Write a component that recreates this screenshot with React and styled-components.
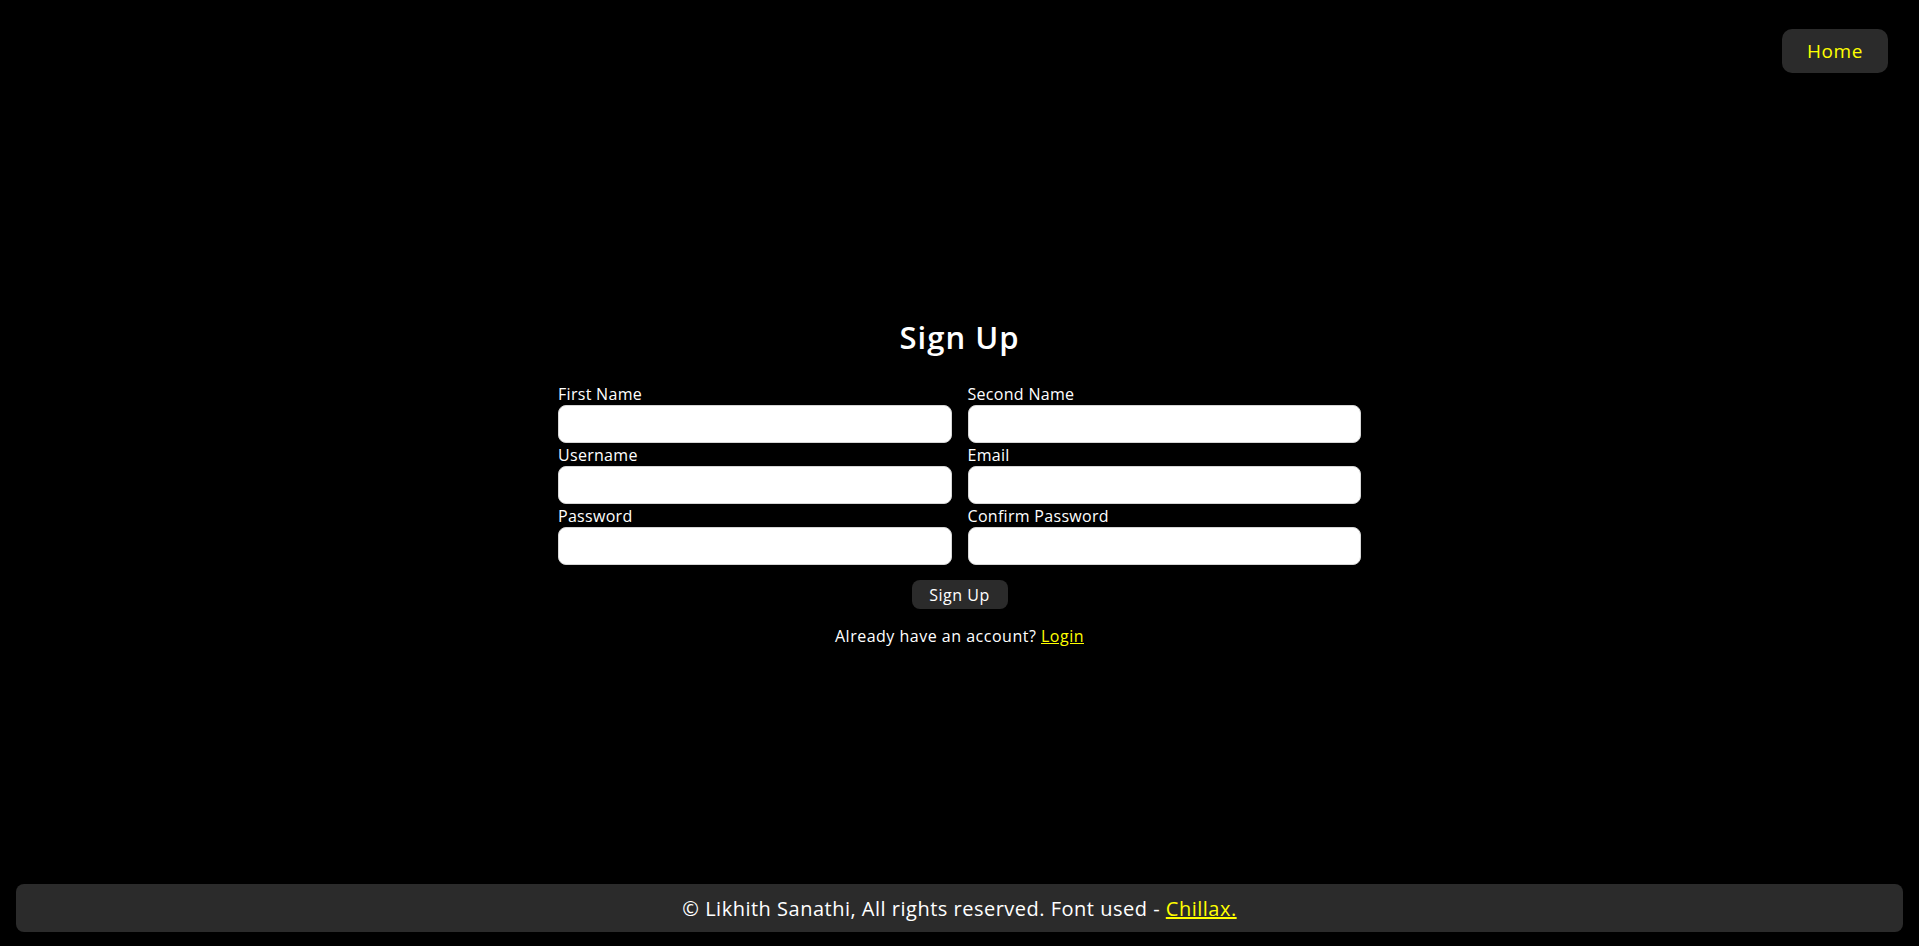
import React from "react";
import styled, { createGlobalStyle } from "styled-components";

const GlobalStyle = createGlobalStyle`
  * {
    box-sizing: border-box;
  }

  body {
    margin: 0;
    background-color: #000;
    color: #fff;
    font-family: "Open Sans", "Noto Sans", sans-serif;
  }
`;

const Page = styled.div`
  min-height: 100vh;
  display: flex;
  flex-direction: column;
`;

const Header = styled.header`
  display: flex;
  justify-content: flex-end;
  padding: 29px 31px 0 0;
`;

const HomeButton = styled.a`
  display: flex;
  align-items: center;
  justify-content: center;
  width: 106px;
  height: 44px;
  border-radius: 10px;
  background-color: #2b2b2b;
  color: #ffff00;
  font-size: 19px;
  letter-spacing: 0.6px;
  text-decoration: none;
  cursor: pointer;
`;

const Main = styled.main`
  flex: 1;
  display: flex;
  justify-content: center;
  align-items: flex-start;
  padding-top: 244px;
`;

const FormCard = styled.form`
  display: flex;
  flex-direction: column;
  align-items: center;
  width: 803px;
`;

const Title = styled.h1`
  margin: 0 0 27px;
  font-size: 31px;
  font-weight: 600;
  line-height: 40px;
  letter-spacing: 1px;
`;

const FieldGrid = styled.div`
  display: grid;
  grid-template-columns: 1fr 1fr;
  column-gap: 16px;
  row-gap: 2px;
  width: 100%;
`;

const Field = styled.label`
  display: flex;
  flex-direction: column;
  gap: 1px;
`;

const LabelText = styled.span`
  font-size: 16px;
  line-height: 20px;
  letter-spacing: 0.3px;
  color: #fff;
`;

const Input = styled.input`
  height: 38px;
  width: 100%;
  border: 1px solid #d6d6d6;
  border-radius: 8px;
  background-color: #fff;
  padding: 0 10px;
  font-family: inherit;
  font-size: 15px;
  outline: none;
`;

const SubmitButton = styled.button`
  margin-top: 15px;
  width: 96px;
  height: 29px;
  border: none;
  border-radius: 8px;
  background-color: #2b2b2b;
  color: #fff;
  font-family: inherit;
  font-size: 16px;
  letter-spacing: 0.5px;
  cursor: pointer;
`;

const SwitchText = styled.p`
  margin: 17px 0 0;
  font-size: 16px;
  line-height: 20px;
  letter-spacing: 0.5px;
`;

const YellowLink = styled.a`
  color: #ffff00;
  text-decoration: underline;
  cursor: pointer;
`;

const Footer = styled.footer`
  margin: 0 16px 14px;
  height: 48px;
  border-radius: 8px;
  background-color: #2b2b2b;
  display: flex;
  align-items: center;
  justify-content: center;
  font-size: 20px;
  letter-spacing: 0.5px;
`;

const fields = [
  { label: "First Name", type: "text" },
  { label: "Second Name", type: "text" },
  { label: "Username", type: "text" },
  { label: "Email", type: "email" },
  { label: "Password", type: "password" },
  { label: "Confirm Password", type: "password" },
];

const App = () => {
  return (
    <Page>
      <GlobalStyle />
      <Header>
        <HomeButton>Home</HomeButton>
      </Header>
      <Main>
        <FormCard onSubmit={(e) => e.preventDefault()}>
          <Title>Sign Up</Title>
          <FieldGrid>
            {fields.map((f) => (
              <Field key={f.label}>
                <LabelText>{f.label}</LabelText>
                <Input type={f.type} />
              </Field>
            ))}
          </FieldGrid>
          <SubmitButton type="submit">Sign Up</SubmitButton>
          <SwitchText>
            Already have an account? <YellowLink>Login</YellowLink>
          </SwitchText>
        </FormCard>
      </Main>
      <Footer>
        <span>
          © Likhith Sanathi, All rights reserved. Font used -{" "}
          <YellowLink>Chillax.</YellowLink>
        </span>
      </Footer>
    </Page>
  );
};

export default App;
